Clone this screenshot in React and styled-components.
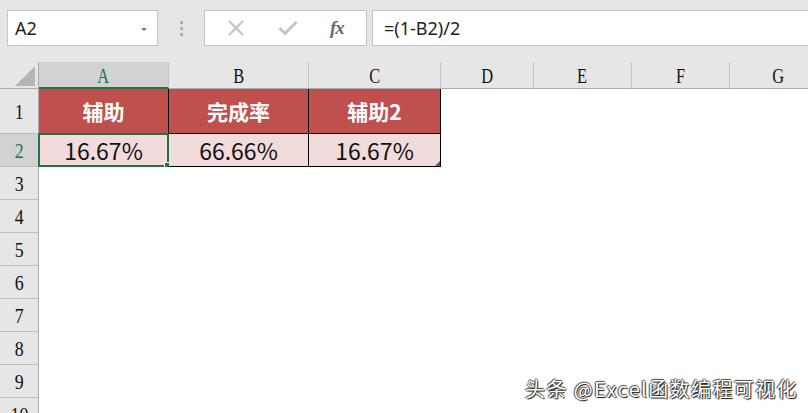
import styled, { createGlobalStyle } from 'styled-components'

const GlobalStyle = createGlobalStyle`
  html, body {
    margin: 0;
    padding: 0;
    background: #fff;
  }
  body {
    width: 808px;
    height: 413px;
    overflow: hidden;
    font-family: "Noto Sans", "Noto Sans CJK SC", sans-serif;
  }
`

const Window = styled.div`
  position: relative;
  width: 808px;
  height: 413px;
  overflow: hidden;
  background: #fff;
`

const FormulaBar = styled.div`
  display: flex;
  align-items: flex-start;
  height: 62px;
  box-sizing: border-box;
  padding: 10px 0 0 7px;
  background: #e6e6e6;
`

const NameBox = styled.div`
  display: flex;
  align-items: center;
  justify-content: space-between;
  width: 151px;
  height: 36px;
  box-sizing: border-box;
  padding: 0 10px 0 7px;
  background: #fff;
  border: 1px solid #c6c6c6;
  font-size: 18px;
  color: #222;
`

const DropArrow = styled.span`
  width: 0;
  height: 0;
  border-left: 3px solid transparent;
  border-right: 3px solid transparent;
  border-top: 3px solid #777;
  margin-top: 2px;
`

const Grip = styled.div`
  display: flex;
  flex-direction: column;
  align-items: center;
  justify-content: center;
  gap: 3px;
  width: 46px;
  height: 36px;

  span {
    width: 3px;
    height: 3px;
    background: #b0b0b0;
  }
`

const ToolBox = styled.div`
  display: flex;
  align-items: center;
  justify-content: space-around;
  width: 163px;
  height: 36px;
  box-sizing: border-box;
  padding: 0 6px;
  background: #fff;
  border: 1px solid #c6c6c6;
`

const Fx = styled.span`
  font-family: "Liberation Serif", serif;
  font-style: italic;
  font-weight: bold;
  font-size: 19px;
  color: #6a6a6a;
  letter-spacing: -1px;
`

const FormulaInput = styled.div`
  flex: 1;
  display: flex;
  align-items: center;
  height: 36px;
  box-sizing: border-box;
  margin-left: 5px;
  padding-left: 11px;
  background: #fff;
  border: 1px solid #c6c6c6;
  border-right: none;
  font-size: 18px;
  color: #222;
`

const Sheet = styled.div`
  display: grid;
  grid-template-columns: 39px 130px 140px 132px 93px 98px 98px 98px;
  grid-template-rows: 27px 45px repeat(9, 33px);
  font-family: "Liberation Serif", serif;
`

const Corner = styled.div`
  display: flex;
  align-items: flex-end;
  justify-content: flex-end;
  box-sizing: border-box;
  padding: 0 3px 2px 0;
  background: #e6e6e6;
  border-right: 1px solid #ababab;
  border-bottom: 1px solid #ababab;
`

const ColHead = styled.div`
  display: flex;
  align-items: center;
  justify-content: center;
  box-sizing: border-box;
  padding-top: 3px;
  background: ${p => (p.$active ? '#d2d2d2' : '#e6e6e6')};
  color: ${p => (p.$active ? '#217346' : '#111')};
  border-right: 1px solid #c4c4c4;
  border-bottom: ${p => (p.$active ? '2px solid #217346' : '1px solid #ababab')};
  font-size: 20px;

  span {
    display: inline-block;
    transform: scaleX(0.82);
  }
`

const RowHead = styled.div`
  display: flex;
  align-items: center;
  justify-content: center;
  box-sizing: border-box;
  padding-top: 3px;
  background: ${p => (p.$active ? '#d2d2d2' : '#e6e6e6')};
  color: ${p => (p.$active ? '#217346' : '#111')};
  border-right: 1px solid #ababab;
  border-bottom: 1px solid #bdbdbd;
  font-size: 21px;

  span {
    display: inline-block;
    transform: scaleX(0.85);
  }
`

const Cell = styled.div`
  position: relative;
  display: flex;
  align-items: center;
  justify-content: center;
  box-sizing: border-box;
  font-family: "Noto Sans CJK SC", "Noto Sans", sans-serif;
  background: ${p => (p.$head ? '#c0504d' : p.$data ? '#f2dcdb' : '#fff')};
  color: ${p => (p.$head ? '#fff' : '#111')};
  font-weight: ${p => (p.$head ? 'bold' : 'normal')};
  font-size: ${p => (p.$head ? '21px' : '23px')};
  border-right: ${p => (p.$head || p.$data ? '1px solid #000' : 'none')};
  border-bottom: ${p => (p.$head || p.$data ? '1px solid #000' : 'none')};
`

const Selection = styled.div`
  position: absolute;
  left: -1px;
  top: -1px;
  right: -1px;
  bottom: -1px;
  border: 2px solid #217346;
  pointer-events: none;

  &::after {
    content: '';
    position: absolute;
    right: -5px;
    bottom: -5px;
    width: 6px;
    height: 6px;
    background: #217346;
    border: 1px solid #fff;
  }
`

const FillMark = styled.div`
  position: absolute;
  right: 0;
  bottom: 0;
  width: 0;
  height: 0;
  border-left: 5px solid transparent;
  border-bottom: 5px solid #3b58b4;
`

const Watermark = styled.div`
  position: absolute;
  right: 10px;
  bottom: 14px;
  font-family: "Noto Sans CJK SC", "Noto Sans", sans-serif;
  font-size: 20px;
  line-height: 1;
  color: #fff;
  letter-spacing: 1.4px;
  text-shadow: 1px 1px 1px #111, -1px 0 1px #444, 0 -1px 1px #444;
`

const cols = ['A', 'B', 'C', 'D', 'E', 'F', 'G']
const tableHead = ['辅助', '完成率', '辅助2']
const tableData = ['16.67%', '66.66%', '16.67%']

function Row({ n, children }) {
  return (
    <>
      <RowHead $active={n === 2}>
        <span>{n}</span>
      </RowHead>
      {children}
    </>
  )
}

export default function App() {
  const empty = n => cols.map(c => <Cell key={c + n} />)

  return (
    <Window>
      <GlobalStyle />
      <FormulaBar>
        <NameBox>
          A2
          <DropArrow />
        </NameBox>
        <Grip>
          <span />
          <span />
          <span />
        </Grip>
        <ToolBox>
          <svg width="18" height="16" viewBox="0 0 18 16">
            <path d="M2 1 L16 15 M16 1 L2 15" stroke="#c4c4c4" strokeWidth="2.2" fill="none" />
          </svg>
          <svg width="20" height="16" viewBox="0 0 20 16">
            <path d="M1.5 8 L7 13.5 L18.5 2" stroke="#c4c4c4" strokeWidth="3" fill="none" />
          </svg>
          <Fx>fx</Fx>
        </ToolBox>
        <FormulaInput>=(1-B2)/2</FormulaInput>
      </FormulaBar>

      <Sheet>
        <Corner>
          <svg width="20" height="20" viewBox="0 0 20 20">
            <path d="M20 0 L20 20 L0 20 Z" fill="#b5b5b5" />
          </svg>
        </Corner>
        {cols.map(c => (
          <ColHead key={c} $active={c === 'A'}>
            <span>{c}</span>
          </ColHead>
        ))}

        <Row n={1}>
          {tableHead.map(t => (
            <Cell key={t} $head>{t}</Cell>
          ))}
          {empty(1).slice(3)}
        </Row>

        <Row n={2}>
          {tableData.map((t, i) => (
            <Cell key={i} $data>
              {t}
              {i === 0 && <Selection />}
              {i === 2 && <FillMark />}
            </Cell>
          ))}
          {empty(2).slice(3)}
        </Row>

        {[3, 4, 5, 6, 7, 8, 9, 10, 11].map(n => (
          <Row key={n} n={n}>
            {empty(n)}
          </Row>
        ))}
      </Sheet>

      <Watermark>头条 @Excel函数编程可视化</Watermark>
    </Window>
  )
}
